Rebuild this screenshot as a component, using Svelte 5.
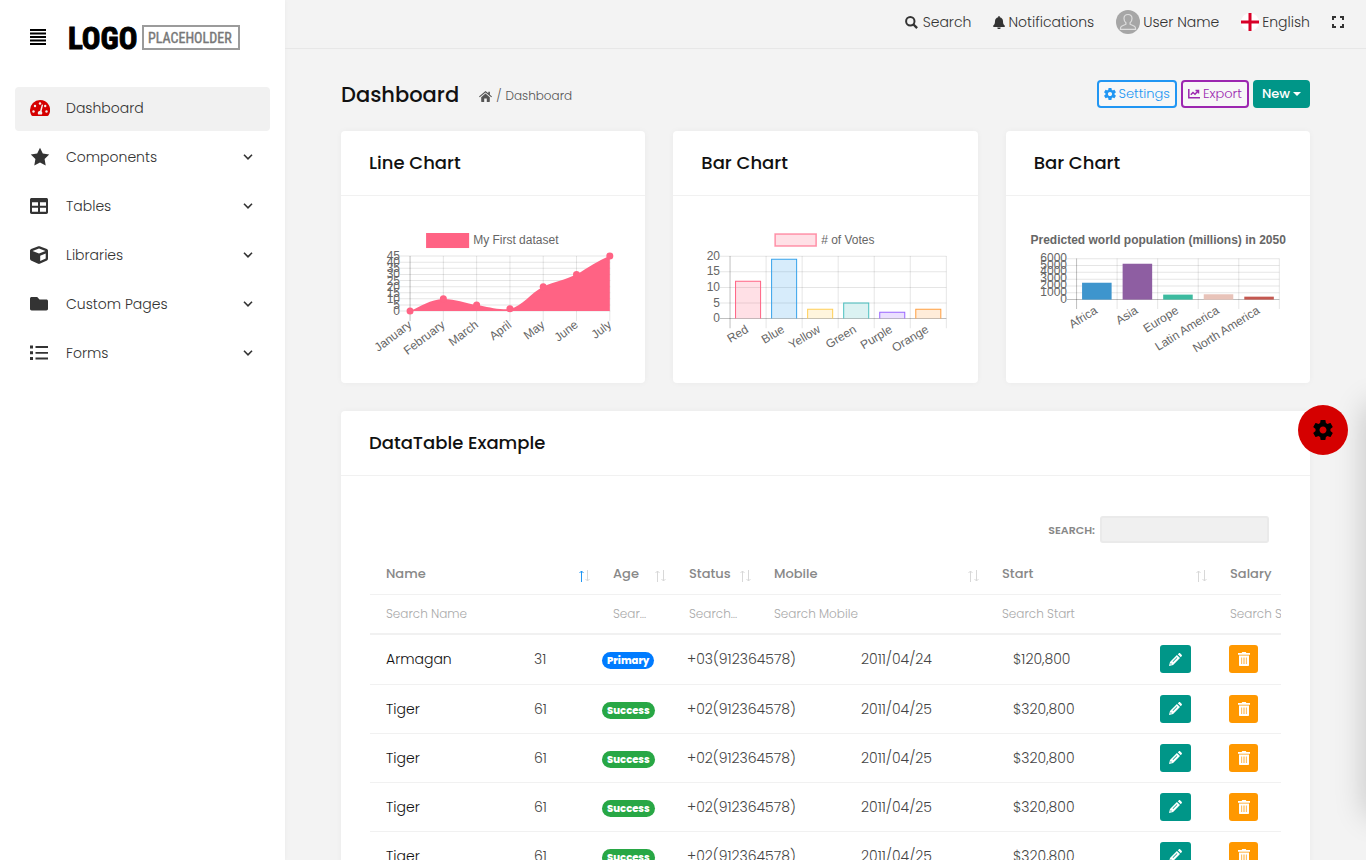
<script>
  const nav = [
    { name: 'Dashboard', icon: 'gauge', active: true },
    { name: 'Components', icon: 'star' },
    { name: 'Tables', icon: 'table' },
    { name: 'Libraries', icon: 'cube' },
    { name: 'Custom Pages', icon: 'folder' },
    { name: 'Forms', icon: 'list' }
  ];

  const lineMonths = ['January', 'February', 'March', 'April', 'May', 'June', 'July'];
  const lineValues = [0, 10, 5, 2, 20, 30, 45];
  const lineX = (i) => 41 + i * 33.25;
  const lineY = (v) => 87 - (v / 45) * 55;

  const votes = [
    { label: 'Red', value: 12, rgb: '255,99,132' },
    { label: 'Blue', value: 19, rgb: '54,162,235' },
    { label: 'Yellow', value: 3, rgb: '255,206,86' },
    { label: 'Green', value: 5, rgb: '75,192,192' },
    { label: 'Purple', value: 2, rgb: '153,102,255' },
    { label: 'Orange', value: 3, rgb: '255,159,64' }
  ];
  const population = [
    { label: 'Africa', value: 2478, color: '#3e95cd' },
    { label: 'Asia', value: 5267, color: '#8e5ea2' },
    { label: 'Europe', value: 734, color: '#3cba9f' },
    { label: 'Latin America', value: 784, color: '#e8c3b9' },
    { label: 'North America', value: 433, color: '#c45850' }
  ];

  const columns = [
    { name: 'Name', width: 227 },
    { name: 'Age', width: 76 },
    { name: 'Status', width: 85 },
    { name: 'Mobile', width: 228 },
    { name: 'Start', width: 228 },
    { name: 'Salary', width: 231 }
  ];
  const tiger = { name: 'Tiger', age: 61, status: 'Success', mobile: '+02(912364578)', start: '2011/04/25', salary: '$320,800' };
  const rows = [
    { name: 'Armagan', age: 31, status: 'Primary', mobile: '+03(912364578)', start: '2011/04/24', salary: '$120,800' },
    tiger, tiger, tiger, tiger, tiger, tiger
  ];
  const bodyWidths = [148, 68, 85, 174, 152, 147, 69, 68];
</script>

{#snippet gear(cls)}
  <svg class={cls} viewBox="2 2 20 20" fill="currentColor" aria-hidden="true"><path d="M19.430 12.980c.04-.32.07-.64.07-.98s-.03-.66-.07-.98l2.110-1.650c.19-.15.24-.42.12-.64l-2-3.460c-.12-.22-.39-.3-.61-.22l-2.490 1c-.52-.4-1.080-.73-1.690-.98l-.38-2.650C14.460 2.180 14.250 2 14 2h-4c-.25 0-.46.18-.49.42l-.38 2.650c-.61.25-1.170.59-1.690.98l-2.490-1c-.23-.09-.49 0-.61.22l-2 3.460c-.13.22-.07.49.12.64l2.110 1.650c-.04.32-.07.65-.07.98s.03.66.07.98l-2.110 1.650c-.19.15-.24.42-.12.64l2 3.460c.12.22.39.3.61.22l2.490-1c.52.4 1.080.73 1.690.98l.38 2.650c.03.24.24.42.49.42h4c.25 0 .46-.18.49-.42l.38-2.650c.61-.25 1.170-.59 1.690-.98l2.490 1c.23.09.49 0 .61-.22l2-3.460c.12-.22.07-.49-.12-.64l-2.110-1.650zM12 15.500c-1.930 0-3.500-1.570-3.500-3.500s1.570-3.500 3.500-3.500 3.500 1.570 3.500 3.500-1.570 3.500-3.500 3.500z"/></svg>
{/snippet}

{#snippet navIcon(kind)}
  <svg class="nav-icon" viewBox="0 0 20 20" fill="currentColor" aria-hidden="true">
    {#if kind === 'gauge'}
      <path d="M10 2A10 10 0 0 0 0 12c0 2 .6 3.800 1.400 5.200.3.500.7.800 1.300.8h14.600c.6 0 1-.3 1.300-.8A10 10 0 0 0 10 2z"/>
      <g fill="#f1f1f1"><circle cx="3.500" cy="13.500" r="1.200"/><circle cx="5" cy="8" r="1.200"/><circle cx="10" cy="5.500" r="1.200"/><circle cx="15.200" cy="8" r="1.200"/><circle cx="16.500" cy="13.500" r="1.200"/><path d="M11.800 6.400l1.300.4-1.500 6.400c.9 1 .9 2.300.2 3.300H8.200c-1-1.700-.2-3.500 1.900-3.800z"/></g>
    {:else if kind === 'star'}
      <path d="M10 .8l2.800 5.800 6.400.9-4.600 4.500 1.100 6.400-5.700-3-5.700 3 1.100-6.400L.8 7.500l6.400-.9z"/>
    {:else if kind === 'table'}
      <path fill-rule="evenodd" d="M1.700 2h14.600c1 0 1.700.7 1.700 1.700v12.600c0 1-.7 1.700-1.700 1.700H1.700c-1 0-1.700-.7-1.700-1.700V3.700C0 2.700.7 2 1.700 2zM2 6.200v3.600h6V6.200zm8 0v3.600h6V6.200zm-8 5.600v4h6v-4zm8 0v4h6v-4z"/>
    {:else if kind === 'cube'}
      <path fill-rule="evenodd" d="M8.400 1.300a2 2 0 0 1 1.200 0l7.300 2.700c.7.300 1.100.9 1.100 1.600v8.200c0 .7-.4 1.300-1 1.600l-7.300 3.400c-.5.200-1 .2-1.500 0L1 15.400c-.6-.3-1-.9-1-1.600V5.600C0 4.900.4 4.300 1.100 4zM9 3.500L2.500 5.900 9 8.600l6.500-2.700zM10.200 10.700v5.400l5.500-2.600V8.400z"/>
    {:else if kind === 'folder'}
      <path d="M1.700 3h5.500l2.300 2.500h6.800c1 0 1.700.7 1.700 1.700v7.600c0 1-.7 1.700-1.700 1.700H1.700C.7 16.500 0 15.800 0 14.800V4.700C0 3.700.7 3 1.700 3z"/>
    {:else}
      <path d="M0 2.500h3v3H0zm5.500.6H18v1.900H5.500zM0 8.300h3v3H0zm5.500.6H18v1.900H5.500zM0 14h3v3H0zm5.500.6H18v1.900H5.500z"/>
    {/if}
  </svg>
{/snippet}

<div class="layout">
  <aside class="sidebar">
    <div class="brand">
      <button class="plain menu" aria-label="Toggle menu">
        <svg width="16" height="16" viewBox="0 0 16 16" fill="currentColor" aria-hidden="true"><path d="M0 0h16v2H0zM0 3.500h16v2H0zM0 7h16v2H0zM0 10.500h16v2H0zM0 14h16v2H0z"/></svg>
      </button>
      <a class="logo" href="#home" aria-label="Logo placeholder">
        <svg width="172" height="27" viewBox="0 0 172 27" aria-hidden="true">
          <text class="logo-big" x="0" y="25">LOGO</text>
          <rect x="75" y="2" width="96" height="23" fill="none" stroke="#9b9b9b" stroke-width="2"/>
          <text class="logo-small" x="80" y="19">PLACEHOLDER</text>
        </svg>
      </a>
    </div>
    <nav>
      {#each nav as item}
        <a class="nav-link" class:active={item.active} href="#{item.icon}">
          {@render navIcon(item.icon)}
          <span>{item.name}</span>
          {#if !item.active}
            <svg class="chevron" viewBox="0 0 10 6" fill="none" stroke="currentColor" stroke-width="1.600" aria-hidden="true"><path d="M1 .8l4 4 4-4"/></svg>
          {/if}
        </a>
      {/each}
    </nav>
  </aside>

  <div class="page">
    <header class="topbar">
      <button class="plain search">
        <svg width="13" height="13" viewBox="0 0 13 13" fill="none" stroke="currentColor" aria-hidden="true"><circle cx="5.300" cy="5.300" r="4.200" stroke-width="2"/><path d="M8.500 8.500l3.600 3.600" stroke-width="2.400"/></svg>
        Search
      </button>
      <button class="plain bell">
        <svg width="12" height="13" viewBox="0 0 12 13" fill="currentColor" aria-hidden="true"><path d="M5.200.8a.8.800 0 0 1 1.600 0v.4C8.800 1.600 10 3.200 10 5.200c0 2.500.6 3.200 1.600 4.200.7.700.2 1.600-.6 1.600H1c-.8 0-1.300-.9-.6-1.600C1.400 8.400 2 7.700 2 5.200c0-2 1.200-3.600 3.200-4zM4.300 11.600h3.400a1.700 1.700 0 0 1-3.400 0z"/></svg>
        Notifications
      </button>
      <button class="plain user">
        <svg width="24" height="24" viewBox="0 0 24 24" aria-hidden="true"><circle cx="12" cy="12" r="12" fill="#a6a6a6"/><path d="M12 4.500c-2.600 0-4 1.700-4 4 0 1.900.8 3.300 1.900 4.200v1.500l-4.300 2c-1 .5-1.200 1.500-1.200 3.100h15.200c0-1.600-.2-2.600-1.200-3.100l-4.300-2v-1.500c1.100-.9 1.900-2.300 1.900-4.200 0-2.300-1.400-4-4-4z" fill="none" stroke="#ddd" stroke-width="1.200"/></svg>
        User Name
      </button>
      <button class="plain language">
        <svg width="18" height="18" viewBox="0 0 18 18" aria-hidden="true"><circle cx="9" cy="9" r="9" fill="#fff"/><path d="M7.500 0h3v7.500H18v3h-7.500V18h-3v-7.500H0v-3h7.500z" fill="#d80027"/></svg>
        English
      </button>
      <button class="plain expand" aria-label="Full screen">
        <svg width="12" height="12" viewBox="0 0 12 12" fill="none" stroke="currentColor" stroke-width="2" aria-hidden="true"><path d="M1 4V1h3M8 1h3v3M11 8v3H8M4 11H1V8"/></svg>
      </button>
    </header>

    <main>
      <div class="title-row">
        <h1>Dashboard</h1>
        <div class="crumbs">
          <a href="#home" aria-label="Home"><svg width="13" height="11" viewBox="0 0 13 11" fill="currentColor" aria-hidden="true"><path d="M6.500 2.600l4.300 3.700v4.200c0 .3-.2.500-.5.500H7.800V7.500H5.200V11H2.700c-.3 0-.5-.2-.5-.5V6.300zM6.500 0L9.300 2.300V.8h1.600v2.900L13 5.500l-.7.800-5.800-4.900L.7 6.300 0 5.500z"/></svg></a>
          <span>/</span><span>Dashboard</span>
        </div>
        <div class="actions">
          <button class="btn settings">{@render gear('small-gear')}Settings</button>
          <button class="btn export"><svg width="12" height="10" viewBox="0 0 12 10" fill="none" stroke="currentColor" stroke-width="1.500" aria-hidden="true"><path d="M.8 0v8.800H12M2.800 5.800L5 3.500l2 1.800L10 2M7.500 1.500h3v3"/></svg>Export</button>
          <button class="btn new">New<i class="caret"></i></button>
        </div>
      </div>

      <div class="charts">
        <section class="card">
          <h2>Line Chart</h2>
          <div class="chart">
            <svg viewBox="0 0 248 124" role="img" aria-label="Line chart">
              <rect x="57" y="9" width="43" height="15" fill="#ff6384"/>
              <text x="104" y="20">My First dataset</text>
              {#each Array(10) as _, i}
                <path class="grid" d="M31 {lineY(i * 5)}H241"/>
                <text class="end" x="31" y={lineY(i * 5) + 4}>{i * 5}</text>
              {/each}
              {#each lineMonths as month, i}
                <path class="grid" class:axis={i === 0} d="M{lineX(i)} 32V97"/>
                <text class="end" transform="translate({lineX(i)} 99) rotate(-37)" y="4">{month}</text>
              {/each}
              <path fill="#ff6384" d="M41 87C52 82 61 75.500 74.250 74.800C87 74.800 95 78.800 107.500 80.900C119 82.500 129 86.500 140.750 84.600C153 82.500 161 69 174 62.600C186 57.500 195 56.500 207.250 50.300C219 44 229 36 240.500 32V87Z"/>
              {#each lineValues as v, i}<circle cx={lineX(i)} cy={lineY(v)} r="3.500" fill="#ff6384"/>{/each}
            </svg>
          </div>
        </section>

        <section class="card">
          <h2>Bar Chart</h2>
          <div class="chart">
            <svg viewBox="0 0 248 124" role="img" aria-label="Bar chart of votes">
              <rect x="74" y="10" width="41" height="12" fill="#ff638433" stroke="#ff6384aa" stroke-width="1.500"/>
              <text x="120" y="20">#&nbsp;of Votes</text>
              {#each [20, 15, 10, 5, 0] as v}
                <path class="grid" class:axis={v === 0} d="M19 {94.500 - v * 3.120}H245"/>
                <text class="end" x="19" y={98 - v * 3.120}>{v}</text>
              {/each}
              {#each Array(7) as _, i}
                <path class="grid" class:axis={i === 0} d="M{29 + i * 36} 32V104"/>
              {/each}
              {#each votes as bar, i}
                <path d="M{34.500 + i * 36} 94.500v{-bar.value * 3.120}h25v{bar.value * 3.120}" fill="rgba({bar.rgb},.2)" stroke="rgb({bar.rgb})"/>
                <text class="end" transform="translate({46 + i * 36} 104) rotate(-31)" y="4">{bar.label}</text>
              {/each}
            </svg>
          </div>
        </section>

        <section class="card">
          <h2>Bar Chart</h2>
          <div class="chart">
            <svg viewBox="0 0 248 124" role="img" aria-label="Bar chart of world population">
              <text class="chart-title" x="124" y="20">Predicted world population (millions) in 2050</text>
              {#each Array(7) as _, i}
                <path class="grid" class:axis={i === 0} d="M33 {75.500 - i * 6.800}H245"/>
                <text class="end" x="33" y={78.500 - i * 6.800}>{i * 1000}</text>
              {/each}
              {#each Array(6) as _, i}
                <path class="grid" class:axis={i === 0} d="M{42.500 + i * 40.500} 34.500V85"/>
              {/each}
              {#each population as bar, i}
                <rect x={48 + i * 40.500} y={75.500 - bar.value * 0.0068} width="29.500" height={bar.value * 0.0068} fill={bar.color}/>
                <text class="end" transform="translate({62 + i * 40.500} 85) rotate(-32)" y="4">{bar.label}</text>
              {/each}
            </svg>
          </div>
        </section>
      </div>

      <section class="card data">
        <h2>DataTable Example</h2>
        <div class="data-body">
          <div class="filter"><label for="table-search">SEARCH:</label><input id="table-search" type="search"/></div>
          <div class="scroller">
            <table class="head">
              <colgroup>{#each columns as c}<col style="width: {c.width}px"/>{/each}</colgroup>
              <thead>
                <tr>
                  {#each columns as c, i}
                    <th scope="col"><div class="th"><span>{c.name}</span>
                      <svg width="12" height="12" viewBox="0 0 12 12" fill="none" stroke="#d8d8d8" aria-hidden="true"><path class:sorted={i === 0} d="M3.500 12V1M1.500 3l2-2 2 2"/><path d="M9.500 0v11M7.500 9l2 2 2-2"/></svg>
                    </div></th>
                  {/each}
                </tr>
                <tr class="search-row">
                  {#each columns as c}<td><input type="text" placeholder="Search {c.name}" aria-label="Search {c.name}"/></td>{/each}
                </tr>
              </thead>
            </table>
            <table class="rows">
              <colgroup>{#each bodyWidths as w}<col style="width: {w}px"/>{/each}</colgroup>
              <tbody>
                {#each rows as r}
                  <tr>
                    <td class="name">{r.name}</td>
                    <td>{r.age}</td>
                    <td><span class="badge" class:primary={r.status === 'Primary'}>{r.status}</span></td>
                    <td>{r.mobile}</td>
                    <td>{r.start}</td>
                    <td>{r.salary}</td>
                    <td><button class="icon-btn edit" aria-label="Edit"><svg width="13" height="13" viewBox="0 0 13 13" fill="currentColor" aria-hidden="true"><path fill-rule="evenodd" d="M7.900 2l3.100 3.100-6.900 6.900L0 13l1-4.100zM8.800 1.200l.9-.8c.5-.5 1.100-.5 1.600 0l1.300 1.300c.5.500.5 1.100 0 1.600l-.8.900zM7.800 4.200L3.600 8.400l.5.500 4.200-4.200zM1.800 10.100l-.4 1.500 1.500-.4z"/></svg></button></td>
                    <td><button class="icon-btn remove" aria-label="Delete"><svg width="12" height="14" viewBox="0 0 12 14" fill="currentColor" aria-hidden="true"><path fill-rule="evenodd" d="M4.200 0h3.600l.5 1H12v1.800H0V1h3.700zM1 3.500h10V13c0 .6-.4 1-1 1H2c-.6 0-1-.4-1-1zM3.400 5.500v6.500h.7V5.500zm2.200 0v6.500h.8V5.500zm2.300 0v6.500h.7V5.500z"/></svg></button></td>
                  </tr>
                {/each}
              </tbody>
            </table>
          </div>
        </div>
      </section>
    </main>
  </div>

  <div class="drawer"><button class="drawer-toggle" aria-label="Theme settings">{@render gear('big-gear')}</button></div>
</div>

<style>
  :global(body) { background: #f3f3f3; overflow: hidden; }
  .layout { display: flex; height: 100vh; overflow: hidden; font: 300 14px/20px Poppins, Inter, sans-serif; color: #333; }
  .layout :global(*) { box-sizing: border-box; }
  svg { display: block; flex: none; }
  button, input { font: inherit; color: inherit; }
  button { cursor: pointer; }
  a { color: inherit; text-decoration: none; }

  .sidebar { flex: 0 0 285px; padding: 24px 15px; background: #fff; box-shadow: 0 0 4px rgba(0, 0, 0, .04); }
  .brand { display: flex; align-items: center; gap: 22px; height: 26px; margin: 0 15px 37px; }
  .plain { display: flex; align-items: center; padding: 0; border: 0; background: none; }
  .menu { color: #000; }
  .logo-big { font: 700 31px "Roboto Condensed", Roboto, sans-serif; fill: #000; stroke: #000; }
  .logo-small { font: 400 14px "Roboto Condensed", Roboto, sans-serif; fill: #777; stroke: #777; stroke-width: .4; }
  nav { display: flex; flex-direction: column; gap: 5px; }
  .nav-link { display: flex; align-items: center; height: 44px; padding: 0 15px 2px; border-radius: 4px; }
  .nav-link span { flex: 1; }
  .nav-link.active { background: #f1f1f1; }
  .nav-icon { width: 20px; height: 20px; margin-right: 16px; }
  .active .nav-icon { color: #d50000; }
  .chevron { width: 10px; height: 6px; margin-right: 2px; }

  .page { flex: 1; min-width: 0; }
  .topbar { display: flex; justify-content: flex-end; align-items: center; gap: 22px; height: 49px; padding: 0 22px 4px 0; border-bottom: 1px solid #e7e7e7; }
  .search { gap: 5px; }
  .bell, .user, .language { gap: 3px; }
  main { padding: 31px 56px 0; }
  .title-row { display: flex; align-items: center; height: 28px; margin-bottom: 23px; }
  h1 { margin: 0 20px 0 0; padding-top: 2px; font-size: 21px; line-height: 28px; font-weight: 500; color: #111; }
  .crumbs { display: flex; align-items: center; gap: 4px; padding-top: 4px; font-size: 12px; color: #555; }
  .actions { display: flex; gap: 4px; margin-left: auto; }
  .btn { display: flex; align-items: center; gap: 3px; height: 28px; padding: 0 5px; border: 2px solid; border-radius: 4px; background: #f7f7f7; font-size: 13px; }
  .settings { color: #2196f3; }
  .export { color: #9c27b0; }
  .new { padding: 0 7px; border-color: #009688; background: #009688; color: #fff; font-weight: 500; }
  .small-gear { width: 12px; height: 12px; }
  .caret { border: 4px solid transparent; border-top-color: #fff; border-bottom: 0; }

  .charts { display: grid; grid-template-columns: repeat(3, minmax(0, 1fr)); gap: 28px; margin-bottom: 28px; }
  .card { background: #fff; border-radius: 4px; box-shadow: 0 0 6px rgba(0, 0, 0, .04); }
  h2 { margin: 0; padding: 18px 28px; border-bottom: 1px solid #f1f1f1; font-size: 18px; line-height: 28px; font-weight: 500; color: #111; }
  .chart { padding: 28px 28px 35px; }
  .chart svg { width: 100%; overflow: visible; }
  .chart text { font: 400 12px "Liberation Sans", Arial, sans-serif; fill: #666; }
  .chart .end { text-anchor: end; }
  .chart .chart-title { font-weight: 700; text-anchor: middle; }
  .grid { stroke: rgba(0, 0, 0, .1); }
  .grid.axis { stroke: rgba(0, 0, 0, .25); }

  .data-body { padding: 40px 29px; }
  .filter { display: flex; justify-content: flex-end; align-items: center; gap: 5px; margin: 0 12px 12px 0; font-size: 11px; font-weight: 600; color: #888; }
  .filter input { width: 169px; height: 27px; border: 2px solid #eaeaea; border-radius: 3px; background: #f0f0f0; outline: 0; }
  .scroller { overflow: hidden; }
  table { table-layout: fixed; border-collapse: collapse; width: 100%; }
  .head { width: 118%; }
  th, td { padding: 0 16px; text-align: left; border-bottom: 1px solid #f1f1f1; }
  th { height: 39px; padding-right: 7px; font-size: 13px; font-weight: 500; color: #888; }
  .th { display: flex; align-items: center; justify-content: space-between; }
  .th svg { margin-top: 4px; }
  .sorted { stroke: #2196f3; }
  .search-row td { height: 40px; padding-right: 20px; border-bottom-width: 2px; }
  .search-row input { width: 100%; padding: 0; border: 0; background: none; outline: 0; font-size: 12px; text-overflow: ellipsis; }
  .search-row input::placeholder { color: #aaa; opacity: 1; text-overflow: ellipsis; }
  .rows td { height: 49px; white-space: nowrap; color: #444; }
  .rows .name { color: #111; }
  .badge { display: inline-block; padding: 0 5px; border-radius: 9px; background: #28a745; color: #fff; font-size: 10px; line-height: 17px; font-weight: 800; }
  .badge.primary { background: #007bff; }
  .icon-btn { display: flex; align-items: center; justify-content: center; width: 31px; height: 28px; padding: 0; border: 0; border-radius: 3px; color: #fff; }
  .edit { background: #009688; }
  .remove { width: 29px; background: #ff9800; }

  .drawer { position: fixed; top: 405px; left: 100%; width: 280px; height: 410px; box-shadow: 0 0 30px rgba(0, 0, 0, .2); }
  .drawer-toggle { position: absolute; top: 0; left: -68px; display: grid; place-items: center; width: 50px; height: 50px; padding: 0; border: 0; border-radius: 50%; background: #d50000; color: #000; }
  .big-gear { width: 20px; height: 20px; }
</style>
